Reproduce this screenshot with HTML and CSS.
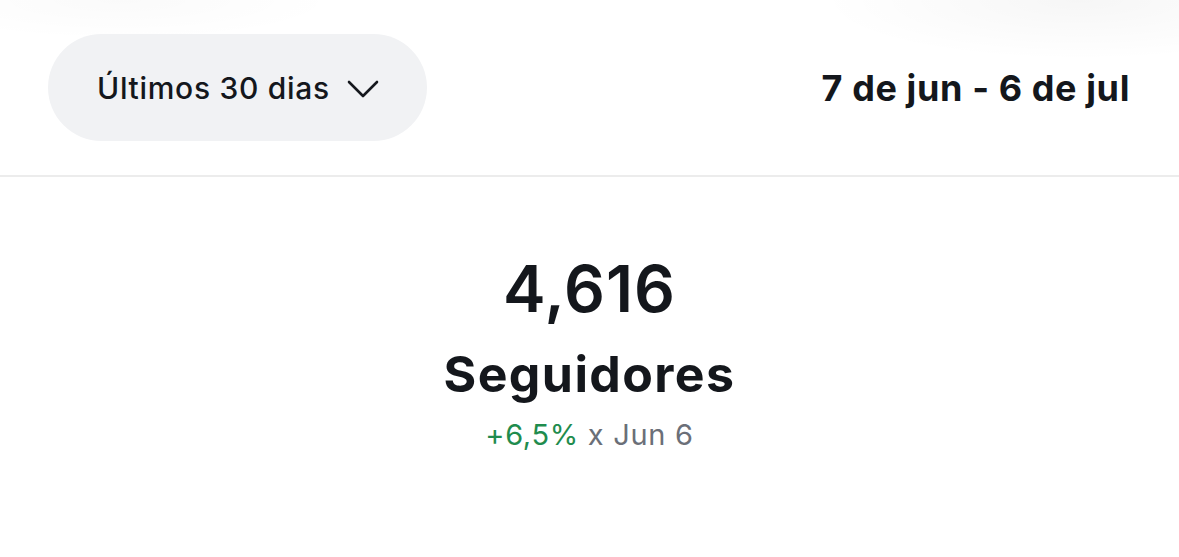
FILE: index.html
```
<!DOCTYPE html>
<html lang="pt">
<head>
  <meta charset="UTF-8" />
  <meta name="viewport" content="width=device-width, initial-scale=1.0" />
  <title>Seguidores</title>
  <link rel="stylesheet" href="styles.css">
</head>
<body>
  <header class="range-bar">
    <button class="range-pill" type="button">
      <span>Últimos 30 dias</span>
      <svg class="chevron" width="32" height="18" viewBox="0 0 32 18" fill="none">
        <path d="M2 2 L16 16 L30 2" stroke="#15181d" stroke-width="2.6" stroke-linecap="round" stroke-linejoin="round" />
      </svg>
    </button>
    <div class="range-dates">7 de jun - 6 de jul</div>
  </header>

  <main class="stat">
    <div class="stat-value">4,616</div>
    <div class="stat-label">Seguidores</div>
    <div class="stat-change"><span class="up">+6,5%</span> x Jun 6</div>
  </main>
</body>
</html>
```

FILE: styles.css
```
body {
  font-family: Inter, "Noto Sans", sans-serif;
  color: #14171c;
  margin: 0;
  background:
    radial-gradient(ellipse 260px 60px at 1080px 0, rgba(0, 0, 0, 0.035), transparent),
    radial-gradient(ellipse 220px 40px at 120px 0, rgba(0, 0, 0, 0.02), transparent),
    #ffffff;
  min-height: 557px;
}
.range-bar {
  display: flex;
  align-items: center;
  justify-content: space-between;
  padding: 34px 49px 34px 48px;
  border-bottom: 2px solid #ececec;
}
.range-pill {
  display: flex;
  align-items: center;
  gap: 17px;
  height: 107px;
  width: 379px;
  padding: 0 0 0 49px;
  border: none;
  border-radius: 54px;
  background: #f1f2f4;
  font-family: inherit;
  font-size: 30px;
  font-weight: 500;
  letter-spacing: 0.7px;
  color: #14171c;
}
.chevron {
  display: block;
  margin-top: 2px;
}
.range-dates {
  font-size: 36px;
  font-weight: 700;
  letter-spacing: 0.6px;
}
.stat {
  display: flex;
  flex-direction: column;
  align-items: center;
  padding-top: 74px;
}
.stat-value {
  font-size: 64px;
  font-weight: 600;
  letter-spacing: 1px;
  line-height: 76px;
}
.stat-label {
  font-size: 50px;
  font-weight: 700;
  letter-spacing: 1.4px;
  line-height: 60px;
  margin-top: 17px;
}
.stat-change {
  font-size: 29px;
  letter-spacing: 0.7px;
  line-height: 36px;
  color: #6b6f78;
  margin-top: 13px;
}
.up {
  color: #1f8c4e;
}
```
